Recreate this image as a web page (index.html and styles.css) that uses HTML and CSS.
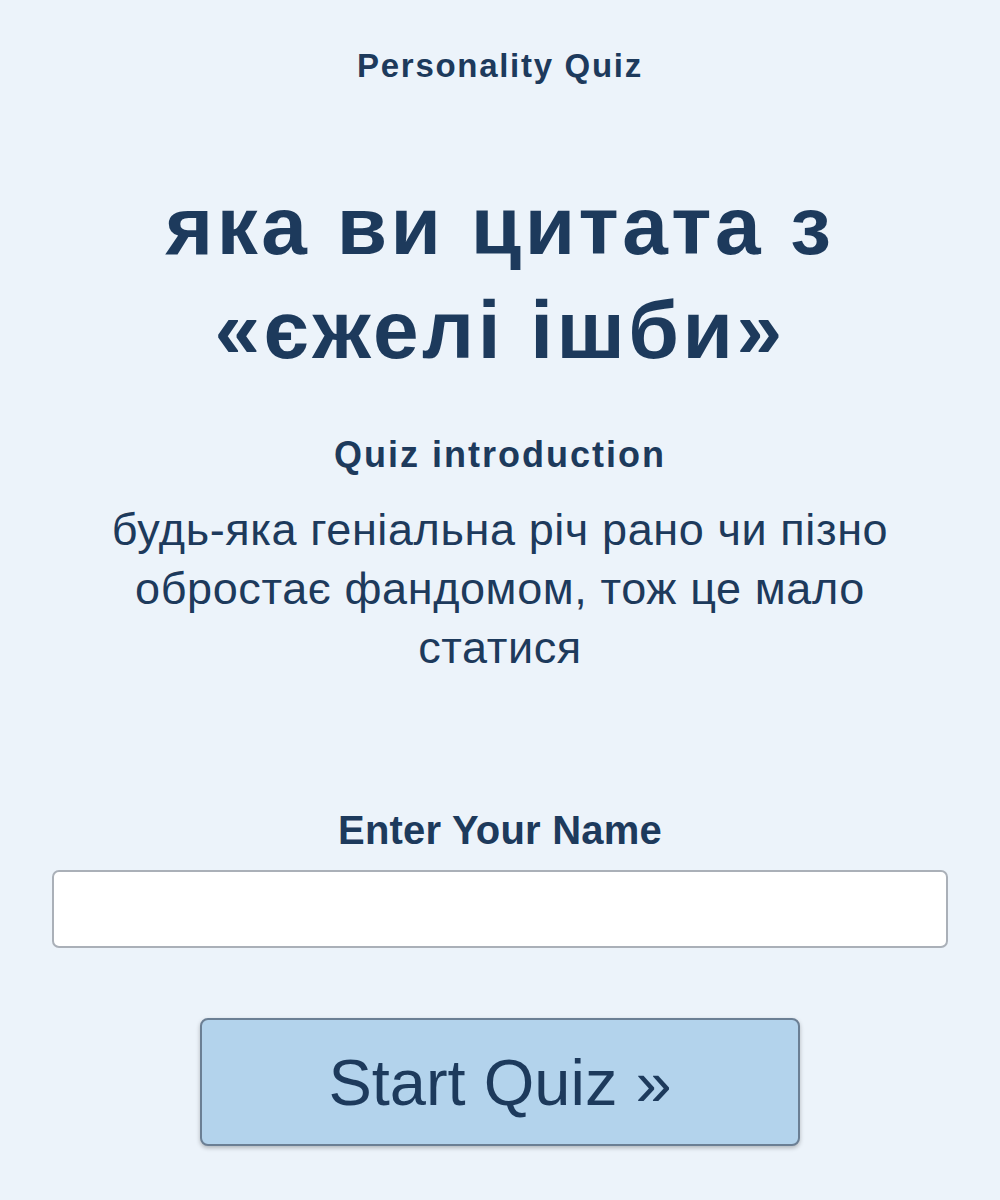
FILE: index.html
```html
<!DOCTYPE html>
<html lang="uk">
<head>
    <meta charset="UTF-8">
    <meta name="viewport" content="width=device-width, initial-scale=1.0">
    <title>Personality Quiz</title>
    <link rel="stylesheet" href="styles.css">
</head>
<body>
    <div class="quiz">
        <div class="quiz-type">Personality Quiz</div>

        <h1 class="quiz-title">яка ви цитата з «єжелі ішби»</h1>

        <div class="intro">
            <h3>Quiz introduction</h3>
            <p>будь-яка геніальна річ рано чи пізно обростає фандомом, тож це мало статися</p>
        </div>

        <form class="start-form" onsubmit="return false;">
            <label for="playerName">Enter Your Name</label>
            <input type="text" id="playerName" class="name-input">
            <button type="submit" class="start-btn">Start Quiz &raquo;</button>
        </form>
    </div>
</body>
</html>
```

FILE: styles.css
```css
body {
    font-family: 'Liberation Sans', Arial, sans-serif;
    background: #ecf3fa;
    color: #1d3a5c;
    margin: 0;
    padding: 0;
}

.quiz {
    max-width: 1000px;
    margin: 0 auto;
    padding: 44px 52px 40px;
    text-align: center;
}

.quiz-type {
    font-size: 33px;
    font-weight: bold;
    line-height: 44px;
    letter-spacing: 1.7px;
}

.quiz-title {
    font-size: 82px;
    line-height: 104px;
    font-weight: bold;
    letter-spacing: 3.5px;
    margin: 86px 90px 0;
}

.intro h3 {
    font-size: 36px;
    line-height: 44px;
    letter-spacing: 2px;
    margin: 51px 0 23px;
}

.intro p {
    font-size: 45px;
    line-height: 59px;
    letter-spacing: 0.6px;
    margin: 0 48px;
}

.start-form {
    display: flex;
    flex-direction: column;
    align-items: center;
    margin-top: 131px;
}

.start-form label {
    font-size: 40px;
    font-weight: bold;
    line-height: 44px;
    letter-spacing: 0.2px;
}

.name-input {
    box-sizing: border-box;
    width: 100%;
    height: 78px;
    margin-top: 18px;
    border: 2px solid #aab0b8;
    border-radius: 7px;
    background: #fff;
    font-size: 30px;
    padding: 0 16px;
}

.start-btn {
    box-sizing: border-box;
    width: 600px;
    height: 128px;
    margin-top: 70px;
    background: #b3d3ec;
    border: 2px solid #6b7f94;
    border-radius: 8px;
    box-shadow: 0 2px 4px rgba(0, 0, 0, 0.25);
    color: #1d3a5c;
    font-family: 'Liberation Sans', Arial, sans-serif;
    font-size: 65px;
    cursor: pointer;
}
```
